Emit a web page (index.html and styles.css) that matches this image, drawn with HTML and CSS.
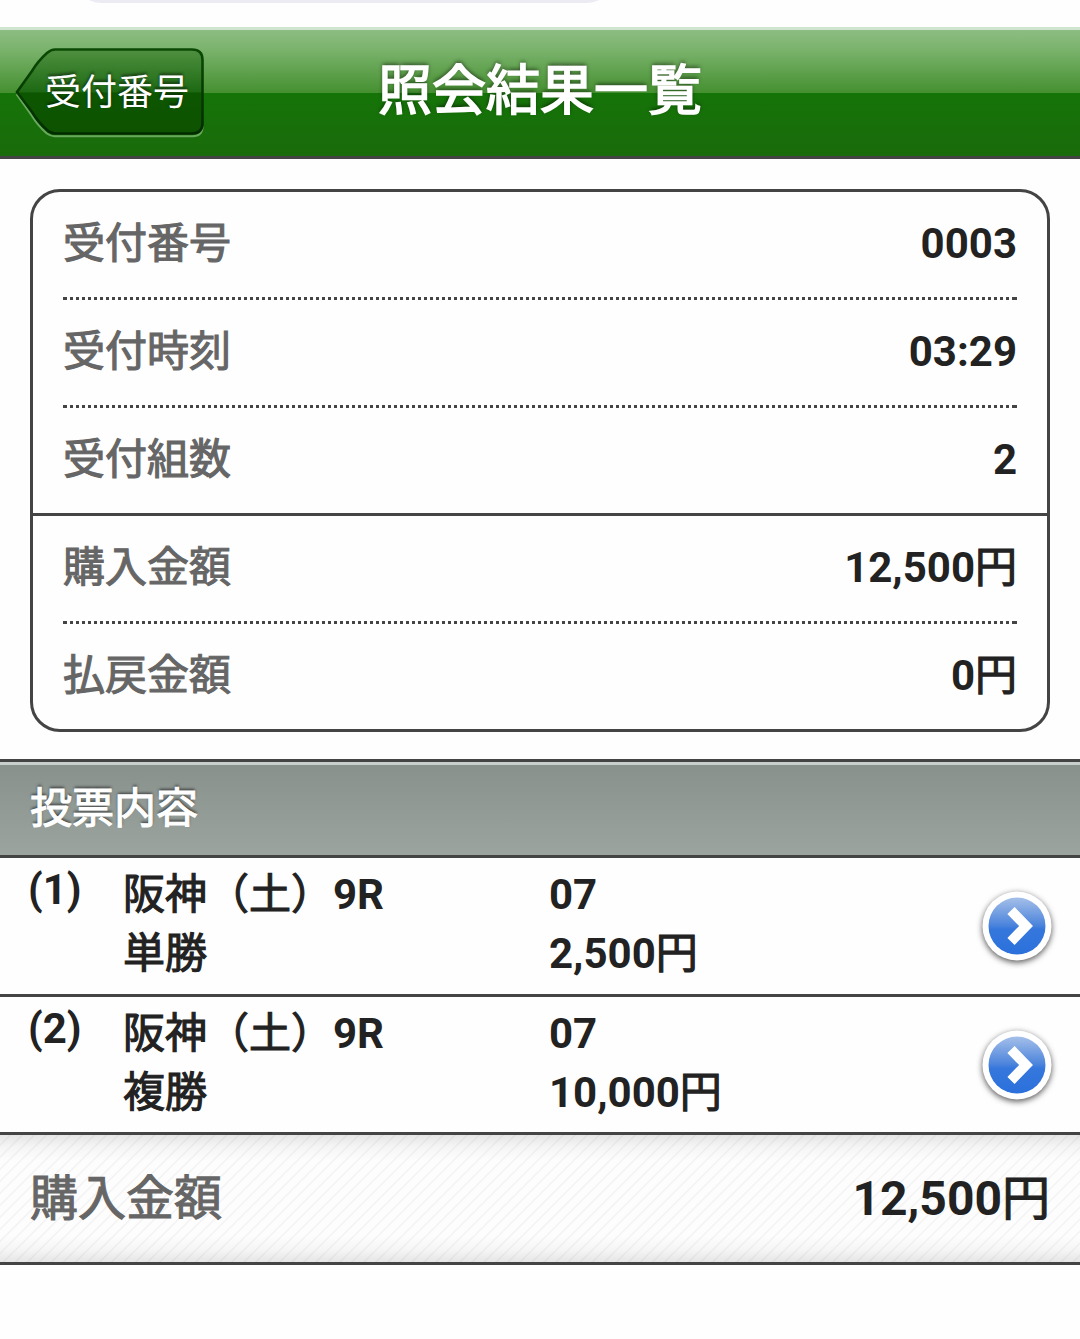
FILE: index.html
```html
<!DOCTYPE html>
<html lang="ja">
<head>
<meta charset="utf-8">
<title>照会結果一覧</title>
<link rel="stylesheet" href="styles.css">
</head>
<body>
<div class="browser-bar"><div class="address"></div></div>
<header class="header">
  <a class="back">
    <svg class="back-shape" viewBox="0 0 192 94" width="192" height="94" aria-hidden="true">
      <defs>
        <linearGradient id="back-fill" x1="0" y1="0" x2="0" y2="1">
          <stop offset="0" stop-color="#4f9040"/>
          <stop offset=".5" stop-color="#1e6a14"/>
          <stop offset=".52" stop-color="#0d5600"/>
          <stop offset="1" stop-color="#0d5200"/>
        </linearGradient>
        <linearGradient id="back-edge" x1="0" y1="0" x2="0" y2="1">
          <stop offset="0" stop-color="#0b4a04"/>
          <stop offset="1" stop-color="#022c00"/>
        </linearGradient>
      </defs>
      <path d="M3 47L18 68Q24 78 33 86Q37 89 41 89H179Q189 89 189 79" transform="translate(-.5 2.2)" fill="none" stroke="#69a95d" stroke-width="2"/>
      <path d="M41 4.5H178Q188.500 4.500 188.500 15V78Q188.500 88.500 178 88.500H41Q37 88.500 33 85Q24 77 18 67L3 47L18 26Q24 16 33 8Q37 4.500 41 4.500Z" fill="url(#back-fill)" stroke="url(#back-edge)" stroke-width="2.6"/>
    </svg>
    <span class="back-label">受付番号</span>
  </a>
  <h1 class="title">照会結果一覧</h1>
</header>
<main>
  <dl class="summary">
    <div class="row"><dt>受付番号</dt><dd><b>0003</b></dd></div>
    <div class="row"><dt>受付時刻</dt><dd><b>03:29</b></dd></div>
    <div class="row group-end"><dt>受付組数</dt><dd><b>2</b></dd></div>
    <div class="row"><dt>購入金額</dt><dd><b>12,500</b>円</dd></div>
    <div class="row"><dt>払戻金額</dt><dd><b>0</b>円</dd></div>
  </dl>
  <h2 class="section">投票内容</h2>
  <ul class="bets">
    <li class="bet">
      <b class="number">(1)</b>
      <div class="race">阪神（土）<b>9R</b><br>単勝</div>
      <div class="stake"><b>07</b><br><b>2,500</b>円</div>
      <svg class="go" viewBox="0 0 84 84" width="84" height="84" aria-hidden="true">
        <defs>
          <linearGradient id="go-fill" x1="0" y1="0" x2="0" y2="1">
            <stop offset="0" stop-color="#a5bfe9"/>
            <stop offset=".48" stop-color="#4d85dc"/>
            <stop offset=".56" stop-color="#3577dc"/>
            <stop offset="1" stop-color="#2b70dc"/>
          </linearGradient>
        </defs>
        <circle class="go-rim" cx="42" cy="41" r="34.5"/>
        <circle cx="42" cy="41" r="28.5" fill="url(#go-fill)"/>
        <path d="M36 25.500L51 41L36 56.500" fill="none" stroke="#fff" stroke-width="10"/>
      </svg>
    </li>
    <li class="bet">
      <b class="number">(2)</b>
      <div class="race">阪神（土）<b>9R</b><br>複勝</div>
      <div class="stake"><b>07</b><br><b>10,000</b>円</div>
      <svg class="go" viewBox="0 0 84 84" width="84" height="84" aria-hidden="true">
        <circle class="go-rim" cx="42" cy="41" r="34.5"/>
        <circle cx="42" cy="41" r="28.5" fill="url(#go-fill)"/>
        <path d="M36 25.500L51 41L36 56.500" fill="none" stroke="#fff" stroke-width="10"/>
      </svg>
    </li>
  </ul>
  <div class="total"><span class="total-label">購入金額</span><span class="total-value"><b>12,500</b>円</span></div>
</main>
</body>
</html>
```
FILE: styles.css
```css
* { box-sizing: border-box; }

body {
  margin: 0;
  background: #fefefe;
  color: #222;
  font: 400 42px/58px "Noto Sans CJK JP", sans-serif;
  -webkit-text-stroke: 1.1px;
}

b {
  font-family: Roboto, "Noto Sans CJK JP", sans-serif;
  font-weight: 700;
  -webkit-text-stroke: 0;
}

h1, h2, dl, dd, ul { margin: 0; padding: 0; font-weight: 400; }

.browser-bar { height: 27px; overflow: hidden; }
.address {
  width: 544px;
  height: 60px;
  margin: -57px 0 0 72px;
  border-radius: 30px;
  background: #ecebf3;
}

.header {
  display: grid;
  grid-template-columns: 1fr auto 1fr;
  height: 132px;
  border-top: 3px solid #cfe5d0;
  border-bottom: 3px solid #444;
  background: linear-gradient(#8cbd82 0, #7cb46e 18px, #459030 63px, #157408 63px, #1a6b0b 100%);
  color: #fff;
}
.back {
  display: grid;
  width: 192px;
  height: 94px;
  margin: 15px 0 0 14px;
  font-size: 36px;
  line-height: 52px;
  -webkit-text-stroke: 0;
  text-shadow: 0 -2px 3px #0008;
}
.back-shape, .back-label { grid-area: 1 / 1; }
.back-label { z-index: 1; padding: 18px 0 0 31px; }
.title {
  padding-top: 17px;
  font-size: 54px;
  line-height: 80px;
  -webkit-text-stroke: 1.6px;
  text-shadow: 0 -2px 4px #0009;
}

.summary {
  margin: 30px;
  margin-bottom: 27px;
  border: 3px solid #444;
  border-radius: 30px;
}
.row {
  display: flex;
  justify-content: space-between;
  height: 108px;
  margin: 0 30px;
  padding-top: 19px;
}
.row:not(:last-child) {
  background:
    linear-gradient(#444, #444) left bottom / 3px 3px no-repeat,
    linear-gradient(#444, #444) right bottom / 3px 3px no-repeat,
    repeating-linear-gradient(90deg, #444 0 3px, transparent 3px 6px) 1px bottom / 100% 3px no-repeat;
}
.row.group-end {
  margin: 0;
  padding: 19px 30px 0;
  border-bottom: 3px solid #444;
  background: none;
}
.row:last-child { height: 105px; }
dt { color: #666; }

.section {
  height: 99px;
  padding: 14px 30px;
  border-top: 3px solid #444;
  border-bottom: 3px solid #444;
  background: linear-gradient(#c9cfcc 0 3px, #89918d 3px, #9ba49f 100%);
  color: #fff;
  font-size: 42px;
  text-shadow: 0 -2px 3px #0009;
}

.bets { list-style: none; }
.bet {
  display: grid;
  grid-template-columns: 95px 426px 1fr 84px;
  height: 139px;
  padding: 4px 21px 0 28px;
  border-bottom: 3px solid #444;
  line-height: 58.5px;
}
.bet + .bet { height: 138px; }
.race b, .stake b { line-height: 1; }
.number { line-height: 56px; }
.go { margin-top: 23px; }
.go-rim { fill: #fff; filter: drop-shadow(0 2px 3px #000a); }

.total {
  display: flex;
  justify-content: space-between;
  height: 130px;
  padding: 24px 30px 0;
  border-bottom: 3px solid #444;
  background:
    linear-gradient(#00000018, #00000008 12px, transparent 26px, transparent 101px, #00000008 115px, #00000018),
    repeating-linear-gradient(135deg, #fdfdfd 0 6px, #f3f3f3 7px 7.5px, #fdfdfd 8.5px);
  font-size: 48px;
  line-height: 70px;
}
.total-label { color: #666; }
```
